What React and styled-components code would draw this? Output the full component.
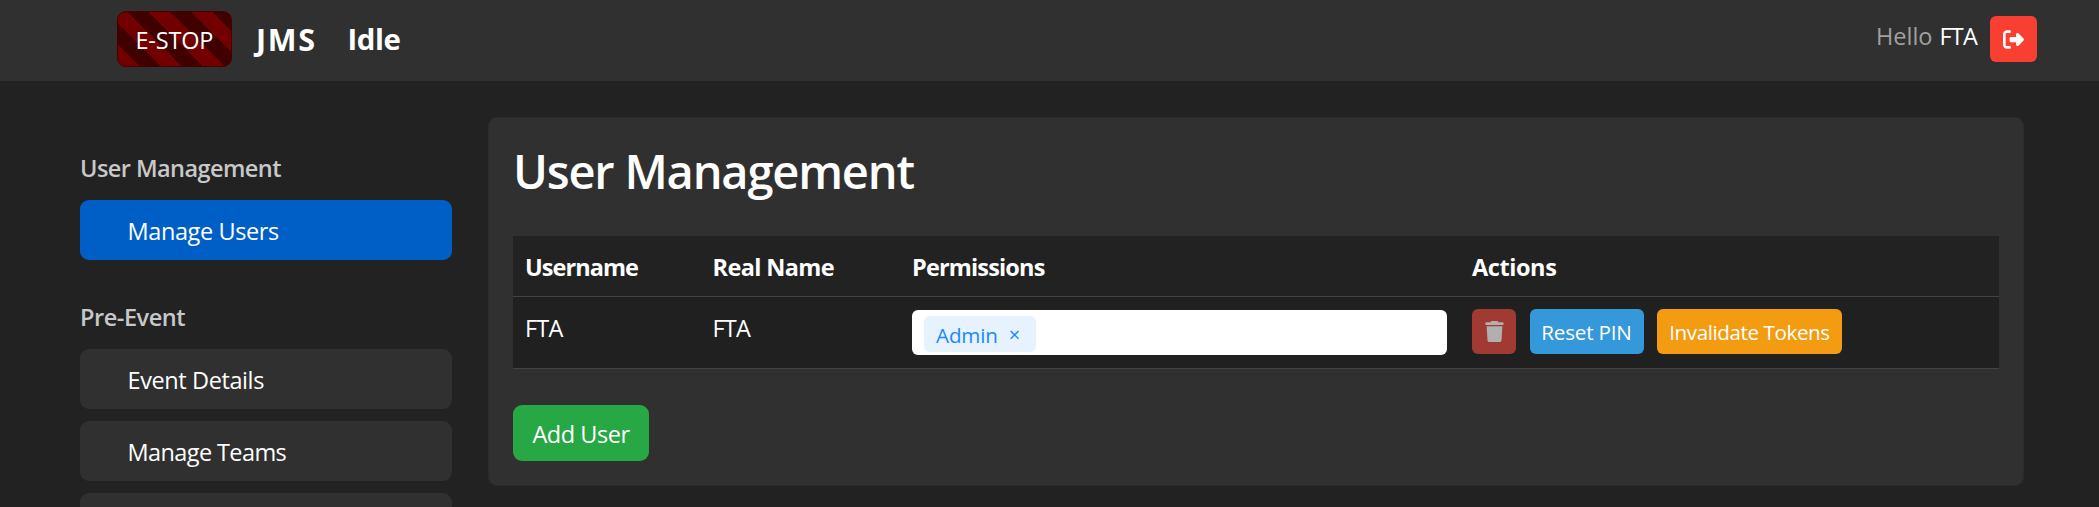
import React from "react";
import styled, { createGlobalStyle } from "styled-components";
import { FaRightFromBracket, FaTrash } from "react-icons/fa6";

const GlobalStyle = createGlobalStyle`
  *, *::before, *::after { box-sizing: border-box; }
  html, body { margin: 0; background: #222; }
  body {
    font-family: "Segoe UI", "Open Sans", "Noto Sans", sans-serif;
    font-size: 23.5px;
    line-height: 36px;
    color: #fff;
  }
`;

const Shell = styled.div`
  height: 100vh;
  overflow: hidden;
`;

const Text = styled.span`
  letter-spacing: ${(p) => p.$track || 0}px;
  white-space: nowrap;
`;

const Navbar = styled.header`
  display: flex;
  align-items: flex-start;
  height: 81px;
  padding: 0 62px 0 117px;
  background: #303030;
`;

const EStop = styled.button`
  width: 115px;
  height: 56px;
  margin: 11px 24px 0 0;
  padding: 10px 0 8px 17.5px;
  border: 1px solid #460000;
  border-radius: 9px;
  background: repeating-linear-gradient(45deg, #720000, #720000 15px, #400000 15px, #400000 30px);
  color: #fff;
  font: inherit;
  text-align: left;
`;

const Brand = styled.div`
  width: ${(p) => p.$width}px;
  margin-top: 17px;
  font-size: ${(p) => p.$size || 29.4}px;
  font-weight: 700;
  line-height: 45px;
`;

const Greeting = styled.div`
  display: flex;
  gap: 7px;
  margin: 18px 13px 0 auto;
  color: #a0a0a0;
`;

const UserName = styled(Text)`
  color: #fff;
`;

const Logout = styled.button`
  display: flex;
  align-items: center;
  justify-content: center;
  width: 47px;
  height: 46px;
  margin-top: 16px;
  padding: 0;
  border: 0;
  border-radius: 6px;
  background: #f93e32;
  color: #fff;
  font-size: 21px;
`;

const Page = styled.div`
  display: flex;
  align-items: flex-start;
  height: calc(100vh - 81px);
  padding: 36px 75px 0 80px;
  overflow: hidden;
`;

const Sidebar = styled.nav`
  width: 372px;
  margin-right: 36px;
  padding-top: 33px;
`;

const Group = styled.section`
  display: flex;
  flex-direction: column;
  gap: 12px;
  margin-bottom: 39px;

  &:last-child { margin-bottom: 0; }
`;

const GroupTitle = styled.h6`
  margin: 0 0 2px;
  font-size: inherit;
  font-weight: 600;
  color: #c8c8c8;
`;

const NavItem = styled.a`
  height: 60px;
  padding: 13px 0 11px 47.5px;
  border-radius: 9px;
  background: ${(p) => (p.$active ? "#005fc7" : "#303030")};
`;

const Panel = styled.main`
  flex: 1;
  height: 369px;
  padding: 24px 24px 0;
  border: 1px solid #2b2b2b;
  border-radius: 9px;
  background: #303030;
`;

const Title = styled.h1`
  height: 94px;
  margin: 0;
  font-size: 47px;
  font-weight: 600;
  line-height: 59px;
`;

const Table = styled.div`
  background: #222;
`;

const Row = styled.div`
  display: grid;
  grid-template-columns: 187.5px 199.5px 560px 1fr;
  height: ${(p) => p.$height}px;
  border-bottom: 1px solid #444;
  font-weight: ${(p) => (p.$head ? 700 : 400)};
  background: ${(p) => (p.$head ? "#222" : "#202020")};
`;

const Cell = styled.div`
  padding: ${(p) => p.$top || 13}px 12px 0;
`;

const TagInput = styled.div`
  display: flex;
  width: 535px;
  height: 45px;
  padding: 6px 12px 3px;
  border-radius: 6px;
  background: #fff;
`;

const Tag = styled.span`
  display: flex;
  width: 112px;
  padding: 1px 0 0 12px;
  gap: 11px;
  border-radius: 6px;
  background: #e7f2ff;
  color: #1a88ff;
  font-size: 20.6px;
  line-height: 36px;
`;

const Close = styled.span`
  font-size: 20px;
`;

const Actions = styled.div`
  display: flex;
  gap: 13.5px;
`;

const ActionButton = styled.button`
  display: flex;
  align-items: center;
  justify-content: center;
  width: ${(p) => p.$width}px;
  height: 45px;
  padding: 0;
  border: 0;
  border-radius: 6px;
  background: ${(p) => p.$color};
  color: ${(p) => p.$ink || "#fff"};
  font: inherit;
  font-size: ${(p) => p.$size || 20.6}px;
`;

const AddButton = styled.button`
  width: 136px;
  height: 56px;
  margin-top: 36px;
  padding: 10px 0 8px;
  border: 0;
  border-radius: 9px;
  background: #28a745;
  color: #fff;
  font: inherit;
`;

export default function App() {
  return (
    <Shell>
      <GlobalStyle />
      <Navbar>
        <EStop><Text $track={-0.2}>E-STOP</Text></EStop>
        <Brand $width={91.5} $size={30.5}><Text $track={1.7}>JMS</Text></Brand>
        <Brand $width={60}><Text $track={-0.4}>Idle</Text></Brand>
        <Greeting>
          <Text>Hello</Text>
          <UserName $track={-0.8}>FTA</UserName>
        </Greeting>
        <Logout aria-label="Log out"><FaRightFromBracket /></Logout>
      </Navbar>
      <Page>
        <Sidebar>
          <Group>
            <GroupTitle><Text $track={-0.56}>User Management</Text></GroupTitle>
            <NavItem $active><Text $track={-0.39}>Manage Users</Text></NavItem>
          </Group>
          <Group>
            <GroupTitle><Text $track={-0.45}>Pre-Event</Text></GroupTitle>
            <NavItem><Text $track={-0.4}>Event Details</Text></NavItem>
            <NavItem><Text $track={-0.6}>Manage Teams</Text></NavItem>
            <NavItem />
          </Group>
        </Sidebar>
        <Panel>
          <Title><Text $track={-1.18}>User Management</Text></Title>
          <Table>
            <Row $head $height={61}>
              <Cell><Text $track={-0.95}>Username</Text></Cell>
              <Cell><Text $track={-0.62}>Real Name</Text></Cell>
              <Cell><Text $track={-0.84}>Permissions</Text></Cell>
              <Cell><Text $track={-0.42}>Actions</Text></Cell>
            </Row>
            <Row $height={72}>
              <Cell><Text $track={-0.8}>FTA</Text></Cell>
              <Cell><Text $track={-0.8}>FTA</Text></Cell>
              <Cell>
                <TagInput>
                  <Tag><Text $track={-0.14}>Admin</Text><Close>×</Close></Tag>
                </TagInput>
              </Cell>
              <Cell $top={12}>
                <Actions>
                  <ActionButton $width={44} $size={21} $color="#a03a32" $ink="#b0b0b0" aria-label="Delete"><FaTrash /></ActionButton>
                  <ActionButton $width={114} $color="#3498db"><Text $track={-0.18}>Reset PIN</Text></ActionButton>
                  <ActionButton $width={185} $color="#f39c12"><Text $track={-0.4}>Invalidate Tokens</Text></ActionButton>
                </Actions>
              </Cell>
            </Row>
          </Table>
          <AddButton><Text $track={-0.47}>Add User</Text></AddButton>
        </Panel>
      </Page>
    </Shell>
  );
}
